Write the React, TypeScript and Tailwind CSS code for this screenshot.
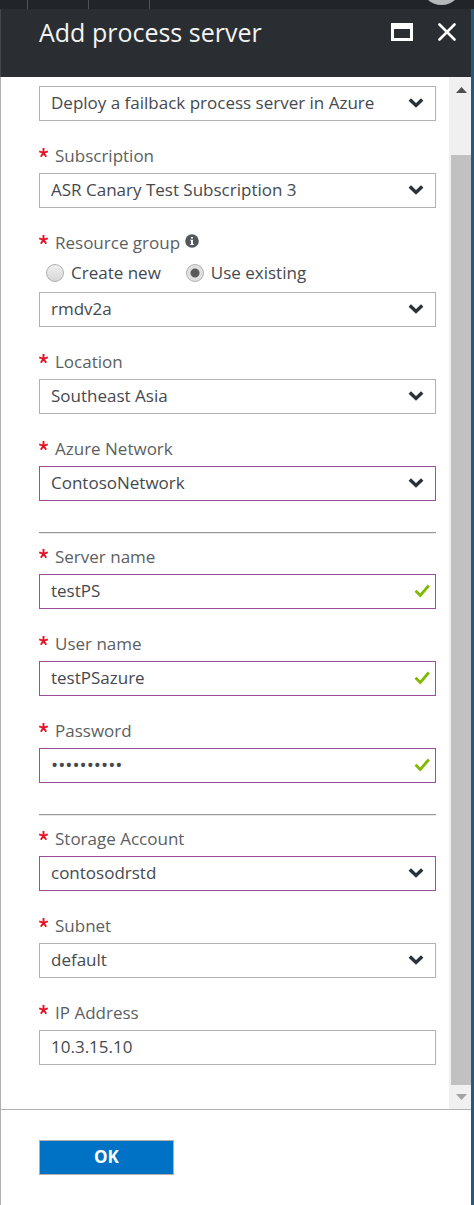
import { useState } from "react";
import type { ReactNode } from "react";

type Tone = "plain" | "edited";

const frame = {
  plain: "border-[#b0b1b2]",
  edited: "border-[#9b4f96]",
};

const control =
  "block h-[35px] w-full appearance-none rounded-none border bg-white pb-0.5 pl-[11px] pr-10 leading-6 text-[#45494f] outline-none";

function Chevron() {
  return (
    <svg
      className="pointer-events-none absolute right-3 top-3 h-2.5 w-4"
      viewBox="0 0 16 10"
      fill="none"
      stroke="#2b3138"
      strokeWidth="3.4"
      aria-hidden="true"
    >
      <path d="M1.800 1.500 8 7.500l6.200-6" />
    </svg>
  );
}

function Check() {
  return (
    <svg
      className="pointer-events-none absolute right-1.5 top-2.5 h-3.5 w-4"
      viewBox="0 0 16 14"
      fill="none"
      stroke="#7fba00"
      strokeWidth="2.8"
      aria-hidden="true"
    >
      <path d="M1.500 6.800 6.300 11.500 14.800 1.500" />
    </svg>
  );
}

function InfoIcon() {
  return (
    <svg className="ml-[5px] mb-1 size-3.5" viewBox="0 0 14 14" aria-hidden="true">
      <circle cx="7" cy="7" r="6.800" fill="#54585c" />
      <path d="M6 2.900h2v1.700H6zM5.300 5.800H8v4.300h.8v1H5.300v-1H6V6.800h-.7z" fill="#fff" />
    </svg>
  );
}

function FieldLabel({ id, text, info }: { id: string; text: string; info?: boolean }) {
  return (
    <div className="flex h-6 items-center text-[17px] leading-6 text-[#5c5f62]">
      <svg className="mb-2 mr-[7px] size-[9px]" viewBox="0 0 9 9" aria-hidden="true">
        <path
          d="M4.500 4.800V0M4.500 4.800.2 3.300M4.500 4.800l4.300-1.500M4.500 4.800 1.800 8.700M4.500 4.800l2.700 3.900"
          stroke="#e81123"
          strokeWidth="1.900"
        />
      </svg>
      <label htmlFor={id}>{text}</label>
      {info && <InfoIcon />}
    </div>
  );
}

function Dropdown({ id, value, tone = "plain", name }: { id: string; value: string; tone?: Tone; name?: string }) {
  return (
    <div className="relative">
      <select id={id} aria-label={name} className={`${control} text-[17px] ${frame[tone]}`}>
        <option>{value}</option>
      </select>
      <Chevron />
    </div>
  );
}

function TextBox({
  id,
  value,
  tone = "plain",
  type = "text",
  valid,
}: {
  id: string;
  value: string;
  tone?: Tone;
  type?: string;
  valid?: boolean;
}) {
  const size = type === "password" ? "text-[19px]" : "text-[17px]";
  return (
    <div className="relative">
      <input id={id} type={type} defaultValue={value} className={`${control} ${size} ${frame[tone]}`} />
      {valid && <Check />}
    </div>
  );
}

function Field({ id, label, children }: { id: string; label: string; children: ReactNode }) {
  return (
    <div className="flex flex-col gap-[5px]">
      <FieldLabel id={id} text={label} />
      {children}
    </div>
  );
}

function Radio({ label, checked, onSelect }: { label: string; checked: boolean; onSelect: () => void }) {
  return (
    <label className="flex items-center gap-[7px]">
      <input
        type="radio"
        name="group-mode"
        checked={checked}
        onChange={onSelect}
        className="size-[18px] appearance-none rounded-full border border-[#b0b0b0] bg-linear-to-b from-[#f0f0f0] to-[#d6d6d6] checked:bg-[radial-gradient(circle,#5a5a5a_4px,#e0e0e0_5px)]"
      />
      {label}
    </label>
  );
}

function Divider() {
  return <hr className="mb-[11px] mt-[31px] h-0.5 border-0 border-t border-[#999] bg-[#e8e8e8]" />;
}

export default function App() {
  const [mode, setMode] = useState("existing");

  return (
    <div className="flex min-h-screen flex-col bg-[#265a7a] font-['Open_Sans','Noto_Sans',sans-serif]">
      <div className="flex h-[9px] justify-between overflow-hidden bg-[#212429]">
        <div className="flex">
          <span className="w-7 border-r border-[#505356]" />
          <span className="w-[61px] border-r border-[#505356]" />
          <span className="w-[61px] border-r border-[#505356]" />
        </div>
        <span className="-mt-9 mr-3 size-[41px] rounded-full bg-[#b4b8bb]" />
      </div>

      <main className="mr-[3px] flex grow flex-col">
        <header className="flex h-[68px] items-start justify-between border-l border-[#43484c] bg-[#2a2e32] pl-[38px] pr-[15px] text-white">
          <h1 className="mt-[5px] text-[25px] leading-9 text-[#f4f4f4]">Add process server</h1>
          <div className="mt-3.5 flex gap-[25px]">
            <button type="button" aria-label="Maximize">
              <svg className="h-[18px] w-[22px]" viewBox="0 0 22 18" fill="#fff" fillRule="evenodd">
                <path d="M0 0h22v18H0zM3 6v9h16V6z" />
              </svg>
            </button>
            <button type="button" aria-label="Close">
              <svg className="size-[18px]" viewBox="0 0 18 18" stroke="#fff" strokeWidth="2.600" strokeLinecap="round">
                <path d="M1.500 1.500l15 15M16.500 1.500l-15 15" />
              </svg>
            </button>
          </div>
        </header>

        <div className="flex border-l border-[#b0b1b2] bg-white">
          <form className="min-w-0 grow pb-11 pl-[38px] pr-[13px] pt-[9px]">
            <div className="flex flex-col gap-[23px]">
              <Dropdown id="deploy" name="Deployment" value="Deploy a failback process server in Azure" />
              <Field id="subscription" label="Subscription">
                <Dropdown id="subscription" value="ASR Canary Test Subscription 3" />
              </Field>
              <div>
                <FieldLabel id="group" text="Resource group" info />
                <div className="mb-[7px] mt-1.5 flex h-6 gap-[25px] pl-[7px] text-[17px] leading-6 text-[#45494f]">
                  <Radio label="Create new" checked={mode === "new"} onSelect={() => setMode("new")} />
                  <Radio label="Use existing" checked={mode === "existing"} onSelect={() => setMode("existing")} />
                </div>
                <Dropdown id="group" value="rmdv2a" />
              </div>
              <Field id="location" label="Location">
                <Dropdown id="location" value="Southeast Asia" />
              </Field>
              <Field id="network" label="Azure Network">
                <Dropdown id="network" value="ContosoNetwork" tone="edited" />
              </Field>
            </div>
            <Divider />
            <div className="flex flex-col gap-[23px]">
              <Field id="server" label="Server name">
                <TextBox id="server" value="testPS" tone="edited" valid />
              </Field>
              <Field id="user" label="User name">
                <TextBox id="user" value="testPSazure" tone="edited" valid />
              </Field>
              <Field id="password" label="Password">
                <TextBox id="password" type="password" value="abcdefghij" tone="edited" valid />
              </Field>
            </div>
            <Divider />
            <div className="flex flex-col gap-[23px]">
              <Field id="storage" label="Storage Account">
                <Dropdown id="storage" value="contosodrstd" tone="edited" />
              </Field>
              <Field id="subnet" label="Subnet">
                <Dropdown id="subnet" value="default" />
              </Field>
              <Field id="ip" label="IP Address">
                <TextBox id="ip" value="10.3.15.10" />
              </Field>
            </div>
          </form>

          <div className="flex w-[22px] shrink-0 flex-col bg-[#f0f0f0] pl-0.5" aria-hidden="true">
            <svg className="mb-[52px] ml-[5px] mt-2.5 h-4 w-[11px]" viewBox="0 0 11 16">
              <path d="M0 6 5.500 0 11 6z" fill="#505050" />
            </svg>
            <div className="grow bg-[#c1c1c1]" />
            <svg className="mb-[9px] ml-[5px] mt-[9px] h-1.5 w-[11px]" viewBox="0 0 11 6">
              <path d="M0 0h11L5.500 6z" fill="#a3a3a3" />
            </svg>
          </div>
        </div>

        <footer className="grow border-l border-t border-[#b0b1b2] bg-white pb-[30px] pl-[38px] pt-[30px]">
          <button
            type="button"
            className="h-[35px] w-[135px] border border-[#b0b1b2] bg-[#0072c6] pb-0.5 text-[17px] font-bold leading-6 text-white"
          >
            OK
          </button>
        </footer>
      </main>
    </div>
  );
}
